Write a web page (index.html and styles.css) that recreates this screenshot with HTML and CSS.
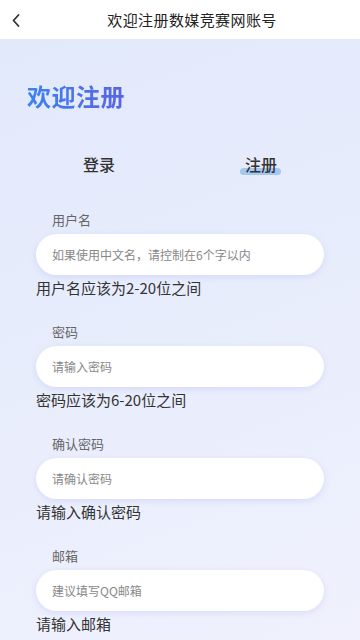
FILE: index.html
```html
<!DOCTYPE html>
<html lang="zh">
<head>
<meta charset="utf-8">
<meta name="viewport" content="width=device-width, initial-scale=1">
<title>欢迎注册数媒竞赛网账号</title>
<link rel="stylesheet" href="styles.css">
</head>
<body>
<div class="page">
  <header class="nav">
    <span class="back">
      <svg width="8" height="13" viewBox="0 0 8 13"><path d="M6.5 1 L1.5 6.5 L6.5 12" fill="none" stroke="#333" stroke-width="1.8" stroke-linecap="round" stroke-linejoin="round"/></svg>
    </span>
    <h1 class="nav-title">欢迎注册数媒竞赛网账号</h1>
  </header>
  <main class="content">
    <h2 class="welcome">欢迎注册</h2>
    <div class="tabs">
      <div class="tab">登录</div>
      <div class="tab active"><span class="tab-text">注册</span></div>
    </div>
    <form class="form">
      <div class="field">
        <label class="label">用户名</label>
        <div class="input">如果使用中文名，请控制在6个字以内</div>
        <div class="hint">用户名应该为2-20位之间</div>
      </div>
      <div class="field">
        <label class="label">密码</label>
        <div class="input">请输入密码</div>
        <div class="hint">密码应该为6-20位之间</div>
      </div>
      <div class="field">
        <label class="label">确认密码</label>
        <div class="input">请确认密码</div>
        <div class="hint">请输入确认密码</div>
      </div>
      <div class="field">
        <label class="label">邮箱</label>
        <div class="input">建议填写QQ邮箱</div>
        <div class="hint">请输入邮箱</div>
      </div>
    </form>
  </main>
</div>
</body>
</html>
```

FILE: styles.css
```css
* { box-sizing: border-box; margin: 0; padding: 0; }
html, body { width: 360px; height: 640px; overflow: hidden; }
body {
  font-family: "Noto Sans CJK SC", "Noto Sans", sans-serif;
  color: #333;
  background: #fff;
}
.page {
  height: 640px;
  display: flex;
  flex-direction: column;
}
.nav {
  height: 39px;
  flex: none;
  background: #fff;
  display: flex;
  align-items: center;
  justify-content: center;
  padding-left: 24px;
  position: relative;
}
.back {
  position: absolute;
  left: 12px;
  top: 14px;
  display: flex;
}
.nav-title {
  font-size: 15px;
  font-weight: 400;
  color: #222;
  line-height: 20px;
  letter-spacing: 0.4px;
}
.content {
  flex: 1;
  background: linear-gradient(160deg, #e2e9fb 0%, #e8edfc 50%, #f0f1fd 100%);
  padding: 0 36px;
}
.welcome {
  margin-top: 41px;
  margin-left: -9px;
  font-size: 24px;
  line-height: 32px;
  font-weight: 700;
  letter-spacing: 0.5px;
  background: linear-gradient(90deg, #3b82f2 0%, #5a64e2 100%);
  -webkit-background-clip: text;
  background-clip: text;
  color: transparent;
  display: inline-block;
}
.tabs {
  margin-top: 40px;
  display: flex;
  justify-content: space-between;
  padding: 0 13px;
}
.tab {
  font-size: 16px;
  line-height: 24px;
  font-weight: 500;
  color: #333;
  width: 100px;
  text-align: center;
  position: relative;
}
.tab-text { position: relative; z-index: 1; }
.tab.active::after {
  content: "";
  position: absolute;
  left: 50%;
  margin-left: -21px;
  top: 16px;
  width: 41px;
  height: 7px;
  border-radius: 4px;
  background: #a5c8f3;
}
.form {
  margin-top: 34px;
  display: flex;
  flex-direction: column;
  gap: 21px;
}
.field {
  display: flex;
  flex-direction: column;
}
.label {
  font-size: 13px;
  line-height: 20px;
  color: #666;
  padding-left: 16px;
  margin-bottom: 4px;
}
.input {
  height: 41px;
  border-radius: 21px;
  background: #fff;
  box-shadow: 0 2px 6px rgba(110, 120, 210, 0.16);
  font-size: 12px;
  color: #888;
  display: flex;
  align-items: center;
  padding-left: 16px;
}
.hint {
  font-size: 15px;
  line-height: 26px;
  color: #333;
}
```
